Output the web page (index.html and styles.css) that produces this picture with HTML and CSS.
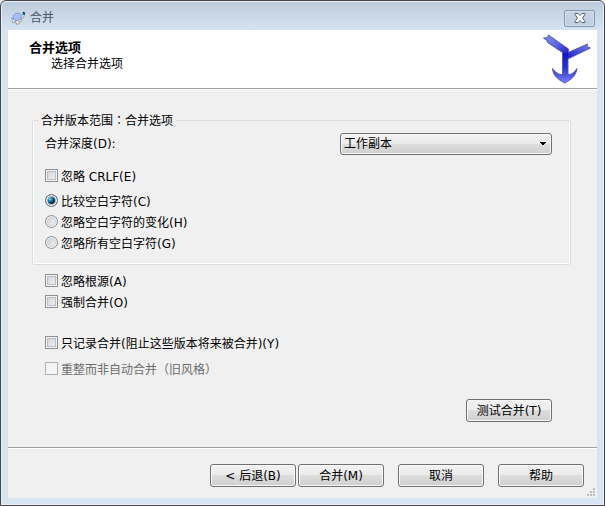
FILE: index.html
```html
<!DOCTYPE html>
<html lang="zh-CN">
<head>
<meta charset="utf-8">
<title>合并</title>
<link rel="stylesheet" href="styles.css">
</head>
<body>
<div class="window">
  <header class="titlebar">
    <svg class="app-icon" width="16" height="14" viewBox="0 0 16 14" aria-hidden="true">
      <path d="M1 7.500h2l2 2h5l3-3" fill="none" stroke="#85888a"/>
      <path d="M3 9l-1 2 2 1 1-2h1v3h3v-3l2 1 1-2" fill="#f4f4f2" stroke="#8b8d8f" stroke-width=".8"/>
      <path d="M3 7.500C3 4 5 2 7.500 2S12 4 11.500 7L8.500 9.500H5z" fill="#a9baff" stroke="#8292c4" stroke-width=".8"/>
      <path d="M11 7l1.500-4L15 2l-1 3-2 3z" fill="#e4eeee" stroke="#8c979c" stroke-width=".7"/>
      <path d="M12.500 1H15v3h-2z" fill="#16658c"/>
      <path d="M13 1h1v1h-1z" fill="#103050"/>
    </svg>
    <span class="caption">合并</span>
    <button class="close" type="button" aria-label="关闭">
      <svg width="14" height="12" viewBox="0 0 14 12" aria-hidden="true">
        <path d="M2 1.500h3l2 2 2-2h3v1L9.500 6l2.500 3.500v1H9l-2-2-2 2H2v-1L4.500 6 2 2.500z" fill="#fff" stroke="#55606f"/>
      </svg>
    </button>
  </header>
  <main class="client">
    <div class="banner">
      <div>
        <h1>合并选项</h1>
        <p>选择合并选项</p>
      </div>
      <svg class="merge-icon" width="50" height="50" viewBox="0 0 50 50" aria-hidden="true">
        <defs>
          <linearGradient id="arm" x1="0" y1="0" x2="1" y2="1"><stop offset="0" stop-color="#8a90ec"/><stop offset=".55" stop-color="#5a61df"/><stop offset="1" stop-color="#1519c2"/></linearGradient>
          <linearGradient id="branch" x1="1" y1="0" x2="0" y2="1"><stop offset="0" stop-color="#7d85e8"/><stop offset="1" stop-color="#161bcc"/></linearGradient>
          <linearGradient id="stem" x1="0" y1="0" x2="0" y2="1"><stop offset="0" stop-color="#0d11bd"/><stop offset=".5" stop-color="#2a30d6"/><stop offset="1" stop-color="#7a82f0"/></linearGradient>
        </defs>
        <path d="M24.500 18.500L44.500 10l-.5 2.500 3.500 1.500L24.500 25z" fill="url(#branch)"/>
        <path d="M19.500 18h5.500v22.500c4 0 6-2 9-6-1 7-5 11-12.500 14.500C14 45 10 41 9.500 34.500c3 4 6 6 10 6z" fill="url(#stem)"/>
        <path d="M.5 4l4-.5 1-2.500L25.500 15v5l-6-1.500L4.500 8.500l-.5-2z" fill="url(#arm)"/>
        <path d="M.5 4l4-.5 1-2.500L25.500 15v3.500l19-8.500-.5 2.500 3.500 1.500L25 25v15.500c4 0 6-2 9-6-1 7-5 11-12.500 14.500C14 45 10 41 9.500 34.500c3 4 6 6 10 6v-22L4.500 8.500l-.5-2z" fill="none" stroke="#53579b" stroke-width=".9" stroke-linejoin="round"/>
      </svg>
    </div>
    <form class="page">
      <fieldset class="group">
        <legend>合并版本范围<span class="colon" lang="zh-TW">：</span>合并选项</legend>
        <div class="depth">
          <label for="depth">合并深度(D):</label>
          <select id="depth"><option>工作副本</option></select>
        </div>
        <label class="option crlf"><input type="checkbox">忽略 CRLF(E)</label>
        <div class="radios">
          <label class="option"><input type="radio" name="space" checked>比较空白字符(C)</label>
          <label class="option"><input type="radio" name="space">忽略空白字符的变化(H)</label>
          <label class="option"><input type="radio" name="space">忽略所有空白字符(G)</label>
        </div>
      </fieldset>
      <div class="options">
        <label class="option"><input type="checkbox">忽略根源(A)</label>
        <label class="option"><input type="checkbox">强制合并(O)</label>
      </div>
      <div class="options record">
        <label class="option"><input type="checkbox">只记录合并(阻止这些版本将来被合并)(Y)</label>
        <label class="option disabled"><input type="checkbox" disabled>重整而非自动合并（旧风格）</label>
      </div>
      <div class="test"><button class="btn" type="button">测试合并(T)</button></div>
    </form>
    <footer class="footer">
      <div class="pair">
        <button class="btn" type="button">&lt; 后退(B)</button>
        <button class="btn" type="button">合并(M)</button>
      </div>
      <button class="btn" type="button">取消</button>
      <button class="btn" type="button">帮助</button>
      <svg class="grip" width="10" height="10" viewBox="0 0 10 10" aria-hidden="true">
        <path d="M7 1h2v2H7zM4 4h2v2H4zM7 4h2v2H7zM1 7h2v2H1zM4 7h2v2H4zM7 7h2v2H7z" fill="#bdbdbd"/>
      </svg>
    </footer>
  </main>
</div>
</body>
</html>
```
FILE: styles.css
```css
* {
  box-sizing: border-box;
}

body {
  margin: 0;
  background: #fff;
  color: #000;
  font: 12px/16px "DejaVu Sans", "Noto Sans CJK SC", sans-serif;
}

.window {
  display: flex;
  flex-direction: column;
  min-height: 100vh;
  padding: 0 7px 7px;
  border: 1px solid #47474b;
  border-radius: 6px 6px 0 0;
  background: linear-gradient(#bccbdb, #d7e4f2 30px);
  box-shadow: inset 0 0 0 1px #e6eef7;
}

.titlebar {
  display: flex;
  align-items: center;
  height: 29px;
  padding: 5px 2px 0;
}

.caption {
  margin-left: 4px;
  color: #4b5766;
}

.close {
  display: flex;
  align-items: center;
  justify-content: center;
  width: 31px;
  height: 17px;
  margin-left: auto;
  padding: 0;
  border: 1px solid #8497b0;
  border-radius: 2px;
  background: linear-gradient(#c6d4e3, #bfcfe1);
  box-shadow: inset 0 0 0 1px #d3dfeb;
}

.client {
  display: flex;
  flex: 1;
  flex-direction: column;
  background: #f0f0f0;
}

.banner {
  display: flex;
  justify-content: space-between;
  height: 60px;
  padding: 4px 4px 0 21px;
  border-bottom: 1px solid #fff;
  background: #fff;
  box-shadow: inset 0 -1px #a0a0a0;
}

.banner h1 {
  margin: 6px 0 0;
  font-size: 13px;
  line-height: 16px;
}

.banner p {
  margin: 0 0 0 22px;
  line-height: 16px;
}

.page {
  flex: 1;
  padding: 22px 26px 24px 24px;
}

.group {
  min-width: 0;
  margin: 0;
  padding: 4px 18px 10px 12px;
  border: 1px solid #d5dfe5;
  border-radius: 3px;
  box-shadow: inset 0 -1px #fff, inset -1px 0 #fff, inset 1px 0 #fff;
}

.group legend {
  margin-left: -7px;
  padding: 0 3px;
}

.colon {
  font-family: "Noto Sans CJK TC", sans-serif;
}

.depth {
  display: flex;
  align-items: center;
  justify-content: space-between;
}

.depth select {
  width: 212px;
  height: 22px;
  padding: 0 4px 0 3px;
  border: 1px solid #707070;
  border-radius: 3px;
  appearance: none;
  background:
    linear-gradient(to bottom right, #000 50%, transparent 50%) right 4px center / 4px 4px no-repeat,
    linear-gradient(to bottom left, #000 50%, transparent 50%) right 8px center / 4px 4px no-repeat,
    linear-gradient(#f2f2f2, #ebebeb 48%, #dddddd 50%, #cfcfcf);
  box-shadow: inset 0 0 0 1px #f8f8f8;
  color: #000;
  font: inherit;
}

.option {
  display: flex;
  gap: 3px;
  align-items: center;
  width: fit-content;
  height: 21px;
}

.crlf {
  margin-top: 11px;
}

.radios {
  margin-top: 4px;
}

.options {
  padding: 6px 13px 0;
}

.record {
  padding-top: 20px;
}

.disabled {
  margin-top: 5px;
  color: #6d6d6d;
}

.option input {
  width: 13px;
  height: 13px;
  margin: 0 0 2px;
  border: 1px solid #8e8f8f;
  appearance: none;
  background: linear-gradient(135deg, #cbcfd5, #f6f6f6);
  box-shadow: inset 0 0 0 1px #f4f4f4, inset 0 0 0 2px #b9bec5;
}

.option input[type="radio"] {
  border-radius: 50%;
  background: linear-gradient(135deg, #c5cad1, #f8f8f8);
  box-shadow: inset 0 0 0 1px #f4f4f4, inset 0 0 0 2px #d0d3d7;
}

.option input[type="radio"]:checked {
  border-color: #66737d;
  background: radial-gradient(circle at 4px 4px, #8fe0f8, #2382b8 2px, #0b3552 4px);
  box-shadow: inset 0 0 0 1px #f4f4f4, inset 0 0 0 2px #9fb1bf;
}

.option input:disabled {
  border-color: #b1b1b1;
  background: #f5f5f5;
  box-shadow: none;
}

.test {
  display: flex;
  justify-content: flex-end;
  margin-top: 19px;
  padding-right: 19px;
}

.btn {
  width: 86px;
  height: 23px;
  padding: 0;
  border: 1px solid #707070;
  border-radius: 3px;
  background: linear-gradient(#f2f2f2, #ebebeb 48%, #dddddd 50%, #cfcfcf);
  box-shadow: inset 0 0 0 1px #f8f8f8;
  color: #000;
  font: inherit;
}

.footer {
  position: relative;
  display: flex;
  gap: 14px;
  justify-content: flex-end;
  padding: 16px 13px 11px;
  border-top: 1px solid #a0a0a0;
  box-shadow: inset 0 1px #fff;
}

.pair {
  display: flex;
  gap: 2px;
}

.grip {
  position: absolute;
  right: 1px;
  bottom: 1px;
}
```
